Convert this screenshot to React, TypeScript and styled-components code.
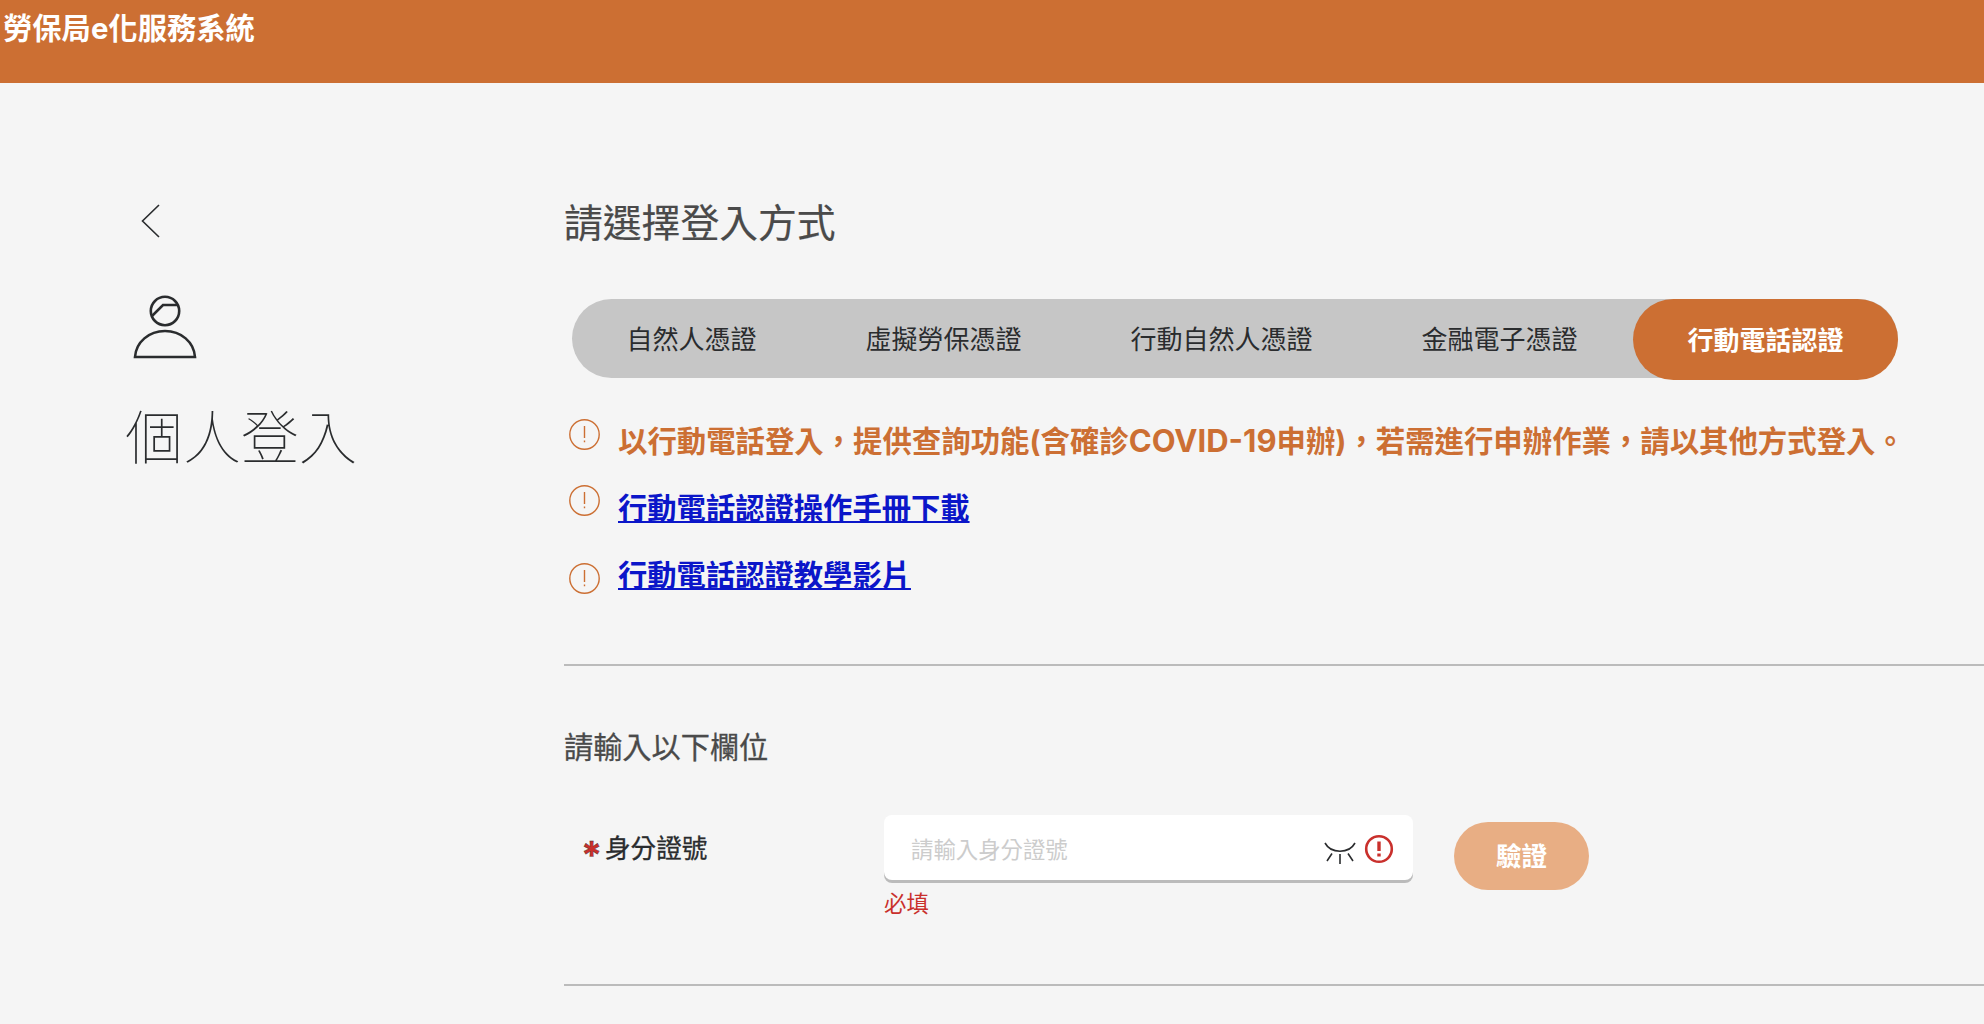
import React from "react";
import styled, { createGlobalStyle } from "styled-components";

const Global = createGlobalStyle`
  html, body {
    margin: 0;
    padding: 0;
    background: #f5f5f5;
    font-family: Inter, "Noto Sans CJK TC", sans-serif;
  }
  * { box-sizing: border-box; }
`;

const Page = styled.div`
  width: 1984px;
  height: 1024px;
  overflow: hidden;
  background: #f5f5f5;
`;

const Header = styled.header`
  height: 83px;
  background: #cc6f33;
  color: #fff;
  font-size: 29.3px;
  font-weight: 700;
  line-height: 58px;
  padding-left: 3px;
`;

const Body = styled.div`
  display: flex;
`;

const Aside = styled.aside`
  width: 564px;
  flex: none;
  padding: 121px 0 0 125px;
  color: #2a2c2e;
`;

const BackIcon = styled.svg`
  display: block;
  width: 20px;
  height: 34px;
  margin-left: 16px;
`;

const PersonIcon = styled.svg`
  display: block;
  width: 64px;
  height: 64px;
  margin: 57px 0 0 8px;
`;

const AsideTitle = styled.h1`
  margin: 45px 0 0;
  font-size: 58px;
  font-weight: 100;
  line-height: 68px;
`;

const Main = styled.main`
  flex: 1;
  padding-top: 115px;
`;

const Title = styled.h2`
  margin: 0;
  font-size: 38.8px;
  font-weight: 400;
  line-height: 50px;
  color: #4a4a4a;
  -webkit-text-stroke: 0.2px #4a4a4a;
`;

const Tabs = styled.div`
  display: flex;
  align-items: flex-start;
  width: 1326px;
  height: 79px;
  margin: 51px 0 0 8px;
  background: #c6c6c6;
  border-radius: 40px;
`;

const Tab = styled.div<{ $active?: boolean }>`
  flex: none;
  display: flex;
  align-items: center;
  justify-content: center;
  height: ${(p) => (p.$active ? "81px" : "79px")};
  padding: 0 54.5px 3px;
  margin-left: ${(p) => (p.$active ? "auto" : "0")};
  width: ${(p) => (p.$active ? "265px" : "auto")};
  border-radius: 41px;
  font-size: 26px;
  font-weight: ${(p) => (p.$active ? 700 : 400)};
  color: ${(p) => (p.$active ? "#fff" : "#2a2c2e")};
  background: ${(p) => (p.$active ? "#cc6f33" : "transparent")};
  white-space: nowrap;
`;

const Notices = styled.div`
  display: flex;
  flex-direction: column;
  margin-top: 41px;
`;

const Notice = styled.div<{ $top: number }>`
  display: flex;
  align-items: flex-start;
  gap: 18px;
  padding-left: 5px;
  margin-top: ${(p) => p.$top}px;
  white-space: nowrap;
`;

const InfoIcon = styled.svg<{ $shift: number }>`
  flex: none;
  width: 31px;
  height: 31px;
  margin-top: ${(p) => p.$shift}px;
`;

const NoticeText = styled.span`
  padding-top: 1px;
  font-size: 29.4px;
  font-weight: 700;
  line-height: 41px;
  color: #cc6f33;
`;

const LatinRun = styled.span`
  font-size: 31px;
`;

const NoticeLink = styled.a<{ $shift: number }>`
  display: block;
  margin-top: ${(p) => p.$shift}px;
  font-size: 29.3px;
  font-weight: 700;
  line-height: 42px;
  color: #0b16c9;
  text-decoration: underline;
`;

const Divider = styled.hr<{ $top: number }>`
  height: 2px;
  margin: ${(p) => p.$top}px 0 0;
  border: 0;
  background: #bbbbbb;
`;

const FieldsTitle = styled.h3`
  margin: 62px 0 0;
  font-size: 29.2px;
  font-weight: 400;
  line-height: 40px;
  color: #4a4a4a;
  -webkit-text-stroke: 0.3px #4a4a4a;
`;

const FieldRow = styled.div`
  display: flex;
  align-items: flex-start;
  margin-top: 47px;
`;

const FieldLabel = styled.label`
  display: flex;
  align-items: center;
  width: 320px;
  height: 62px;
  padding-left: 17px;
  font-size: 25.6px;
  font-weight: 400;
  color: #2a2c2e;
  -webkit-text-stroke: 0.3px #2a2c2e;
`;

const Star = styled.span`
  font-size: 38px;
  font-weight: 700;
  line-height: 38px;
  height: 20px;
  width: 24px;
  color: #c9302c;
`;

const FieldBody = styled.div`
  width: 529px;
`;

const InputBox = styled.div`
  display: flex;
  align-items: center;
  height: 65px;
  padding: 0 19px 0 27px;
  background: #fff;
  box-shadow: 0 3px 0 #bbbbbb;
  border-radius: 8px;
`;

const TextInput = styled.input`
  flex: 1;
  min-width: 0;
  padding: 3px 0 0;
  border: 0;
  outline: 0;
  background: transparent;
  font-family: inherit;
  font-size: 22.4px;
  &::placeholder {
    color: #cccccc;
    opacity: 1;
  }
`;

const EyeIcon = styled.svg`
  flex: none;
  width: 32px;
  height: 26px;
  margin-top: 12px;
`;

const AlertIcon = styled.svg`
  flex: none;
  width: 30px;
  height: 30px;
  margin: 3px 0 0 8px;
`;

const FieldError = styled.div`
  margin-top: 9px;
  font-size: 22.4px;
  line-height: 30px;
  color: #c9302c;
`;

const VerifyButton = styled.button`
  flex: none;
  width: 135px;
  height: 68px;
  margin: 7px 0 0 41px;
  padding: 0 0 4px;
  border: 0;
  border-radius: 34px;
  background: #e8ae84;
  color: #fff;
  font-family: inherit;
  font-size: 25.6px;
  font-weight: 700;
`;

const Info = ({ shift }: { shift: number }) => (
  <InfoIcon $shift={shift} viewBox="0 0 31 31" fill="none">
    <circle cx="15.5" cy="15.5" r="14.7" stroke="#cc6f33" strokeWidth="1.4" />
    <path d="M15.5 7v12M15.5 21.5v1.8" stroke="#cc6f33" strokeWidth="1.4" />
  </InfoIcon>
);

export default function App() {
  return (
    <Page>
      <Global />
      <Header>勞保局e化服務系統</Header>
      <Body>
        <Aside>
          <BackIcon viewBox="0 0 20 34" fill="none">
            <path d="M18 1 1.5 17 18 33" stroke="#2a2c2e" strokeWidth="1.6" />
          </BackIcon>
          <PersonIcon viewBox="0 0 64 64" fill="none" stroke="#2a2c2e" strokeWidth="2.6">
            <circle cx="32" cy="16" r="14.2" />
            <path d="M19 21 30 10H45" />
            <path d="M2 62C3 47 16 36 32 36S61 47 62 62Z" />
          </PersonIcon>
          <AsideTitle>個人登入</AsideTitle>
        </Aside>
        <Main>
          <Title>請選擇登入方式</Title>
          <Tabs>
            <Tab>自然人憑證</Tab>
            <Tab>虛擬勞保憑證</Tab>
            <Tab>行動自然人憑證</Tab>
            <Tab>金融電子憑證</Tab>
            <Tab $active>行動電話認證</Tab>
          </Tabs>
          <Notices>
            <Notice $top={0}>
              <Info shift={0} />
              <NoticeText>
                以行動電話登入，提供查詢功能(含確診<LatinRun>COVID-19</LatinRun>申辦)，若需進行申辦作業，請以其他方式登入。
              </NoticeText>
            </Notice>
            <Notice $top={23}>
              <Info shift={0} />
              <NoticeLink href="#" $shift={3}>行動電話認證操作手冊下載</NoticeLink>
            </Notice>
            <Notice $top={25}>
              <Info shift={8} />
              <NoticeLink href="#" $shift={0}>行動電話認證教學影片</NoticeLink>
            </Notice>
          </Notices>
          <Divider $top={67} />
          <FieldsTitle>請輸入以下欄位</FieldsTitle>
          <FieldRow>
            <FieldLabel>
              <Star>*</Star>
              身分證號
            </FieldLabel>
            <FieldBody>
              <InputBox>
                <TextInput placeholder="請輸入身分證號" />
                <EyeIcon viewBox="0 0 32 26" fill="none" stroke="#2a2c2e" strokeWidth="1.6">
                  <path d="M1 2C7 13 25 13 31 2" />
                  <path d="M16 13v10M8 12.5 3 20M24 12.5l5 7.5" />
                </EyeIcon>
                <AlertIcon viewBox="0 0 30 30" fill="none">
                  <circle cx="15" cy="15" r="12.8" stroke="#c9302c" strokeWidth="2.6" />
                  <path d="M15 7.5v9.5" stroke="#c9302c" strokeWidth="3.4" />
                  <path d="M15 19.5v3" stroke="#c9302c" strokeWidth="3.4" />
                </AlertIcon>
              </InputBox>
              <FieldError>必填</FieldError>
            </FieldBody>
            <VerifyButton>驗證</VerifyButton>
          </FieldRow>
          <Divider $top={65} />
        </Main>
      </Body>
    </Page>
  );
}
